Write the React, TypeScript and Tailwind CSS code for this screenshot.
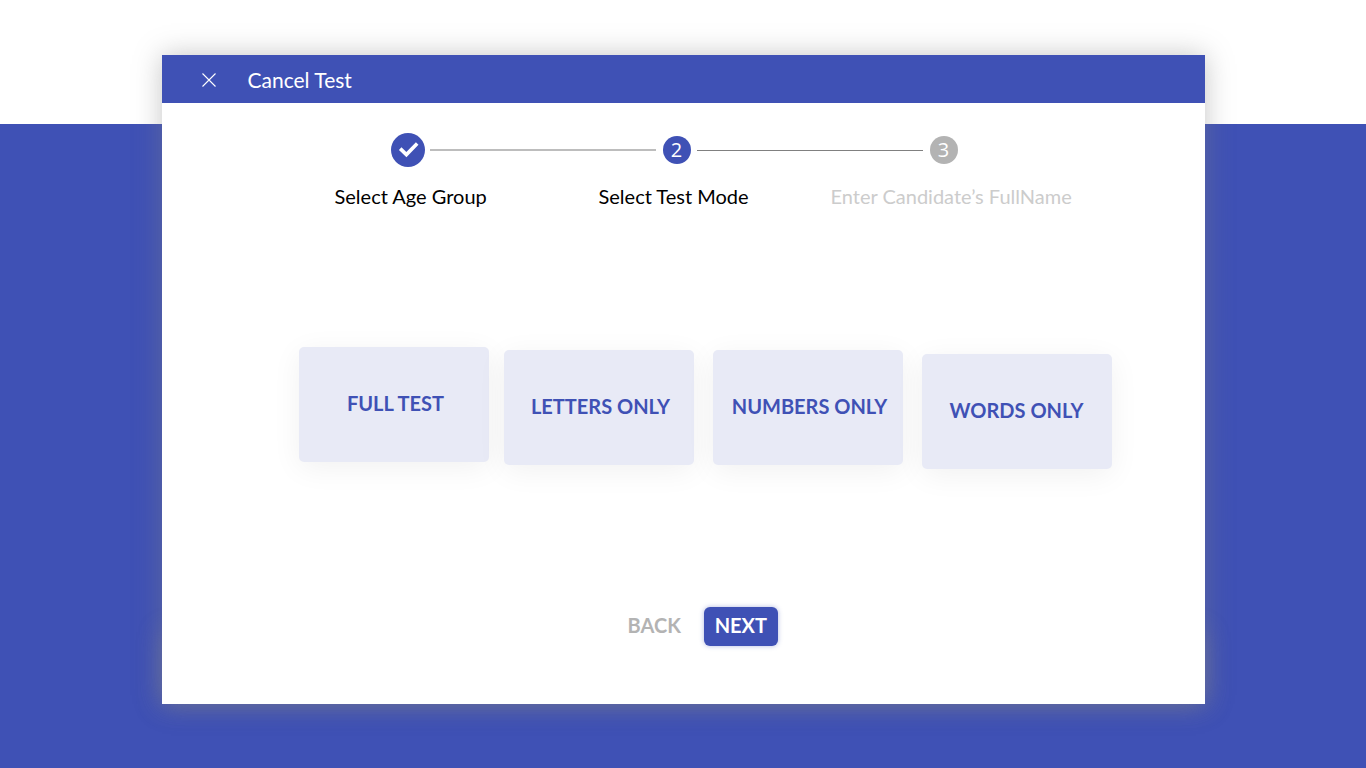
import React from "react";

type Mode = { label: string; place: string };

const modes: Mode[] = [
  { label: "FULL TEST", place: "mr-[15px] pl-[4px]" },
  { label: "LETTERS ONLY", place: "mt-[3px] mr-[19px] pl-[4px]" },
  { label: "NUMBERS ONLY", place: "mt-[3px] mr-[19px] pl-[4px]" },
  { label: "WORDS ONLY", place: "mt-[7px]" },
];

function CheckBadge() {
  return (
    <svg width="34" height="34" viewBox="0 0 34 34" aria-hidden="true">
      <circle cx="17" cy="17" r="17" fill="#3f51b5" />
      <path d="M9.2 15.6 L15.4 21.6 L26.2 10.6" fill="none" stroke="#fff" strokeWidth="3.6" />
    </svg>
  );
}

function Stepper() {
  return (
    <div className="pt-[30px] pl-[173px]">
      <div className="flex items-center pl-[56px]">
        <CheckBadge />
        <span className="ml-[5px] h-[2px] w-[226px] bg-[#bdbdbd]" />
        <span className="ml-[7px] flex size-[28px] items-center justify-center rounded-full bg-[#3f51b5] font-['Open_Sans',sans-serif] text-[20px] leading-none text-white">
          2
        </span>
        <span className="ml-[6px] h-px w-[226px] bg-[#808080]" />
        <span className="ml-[7px] flex size-[28px] items-center justify-center rounded-full bg-[#b3b3b3] font-['Open_Sans',sans-serif] text-[20px] leading-none text-white">
          3
        </span>
      </div>
      <ol className="mt-[15px] grid grid-cols-[264px_232px_240px] text-[20px] leading-[28px] whitespace-nowrap text-black">
        <li>Select Age Group</li>
        <li aria-current="step">Select Test Mode</li>
        <li className="text-[#cccccc]">Enter Candidate’s FullName</li>
      </ol>
    </div>
  );
}

export default function App() {
  return (
    <div className="min-h-screen bg-[linear-gradient(to_bottom,#fff_124px,#3f51b5_124px)] pt-[55px] pb-[64px] font-['Lato',sans-serif]">
      <div className="relative isolate mx-auto max-w-[1043px]">
        <div className="absolute inset-x-0 bottom-0 -z-10 h-[72px] shadow-[0_0_24px_rgba(140,140,140,0.4)]" />
        <main className="bg-white shadow-[0_0_26px_rgba(128,128,128,0.45)]">
          <header className="flex h-[48px] items-center bg-[#3f51b5] pt-[2px] pl-[40px] text-white">
            <button type="button" className="flex items-center gap-[32px] text-[21px]">
              <svg width="14" height="14" viewBox="0 0 14 14" fill="none" stroke="currentColor" aria-hidden="true">
                <path d="M0.5 0.5 L13.5 13.5 M13.5 0.5 L0.5 13.5" strokeWidth="1.1" />
              </svg>
              Cancel Test
            </button>
          </header>

          <Stepper />

          <div className="flex items-start pt-[137px] pl-[137px]">
            {modes.map((mode) => (
              <button
                key={mode.label}
                type="button"
                className={`h-[115px] w-[190px] rounded-[5px] bg-[#e8eaf6] pb-[4px] text-[20px] font-bold whitespace-nowrap text-[#3f51b5] shadow-[0_6px_30px_rgba(0,0,0,0.06)] ${mode.place}`}
              >
                {mode.label}
              </button>
            ))}
          </div>

          <footer className="flex items-center gap-[23px] pt-[138px] pb-[58px] pl-[466px] text-[20px] font-bold">
            <button type="button" className="pb-[4px] text-[#b3b3b3]">
              BACK
            </button>
            <button
              type="button"
              className="h-[39px] w-[74px] rounded-[6px] bg-[#3f51b5] pb-[4px] text-white shadow-[0_0_5px_rgba(63,81,181,0.4)]"
            >
              NEXT
            </button>
          </footer>
        </main>
      </div>
    </div>
  );
}
